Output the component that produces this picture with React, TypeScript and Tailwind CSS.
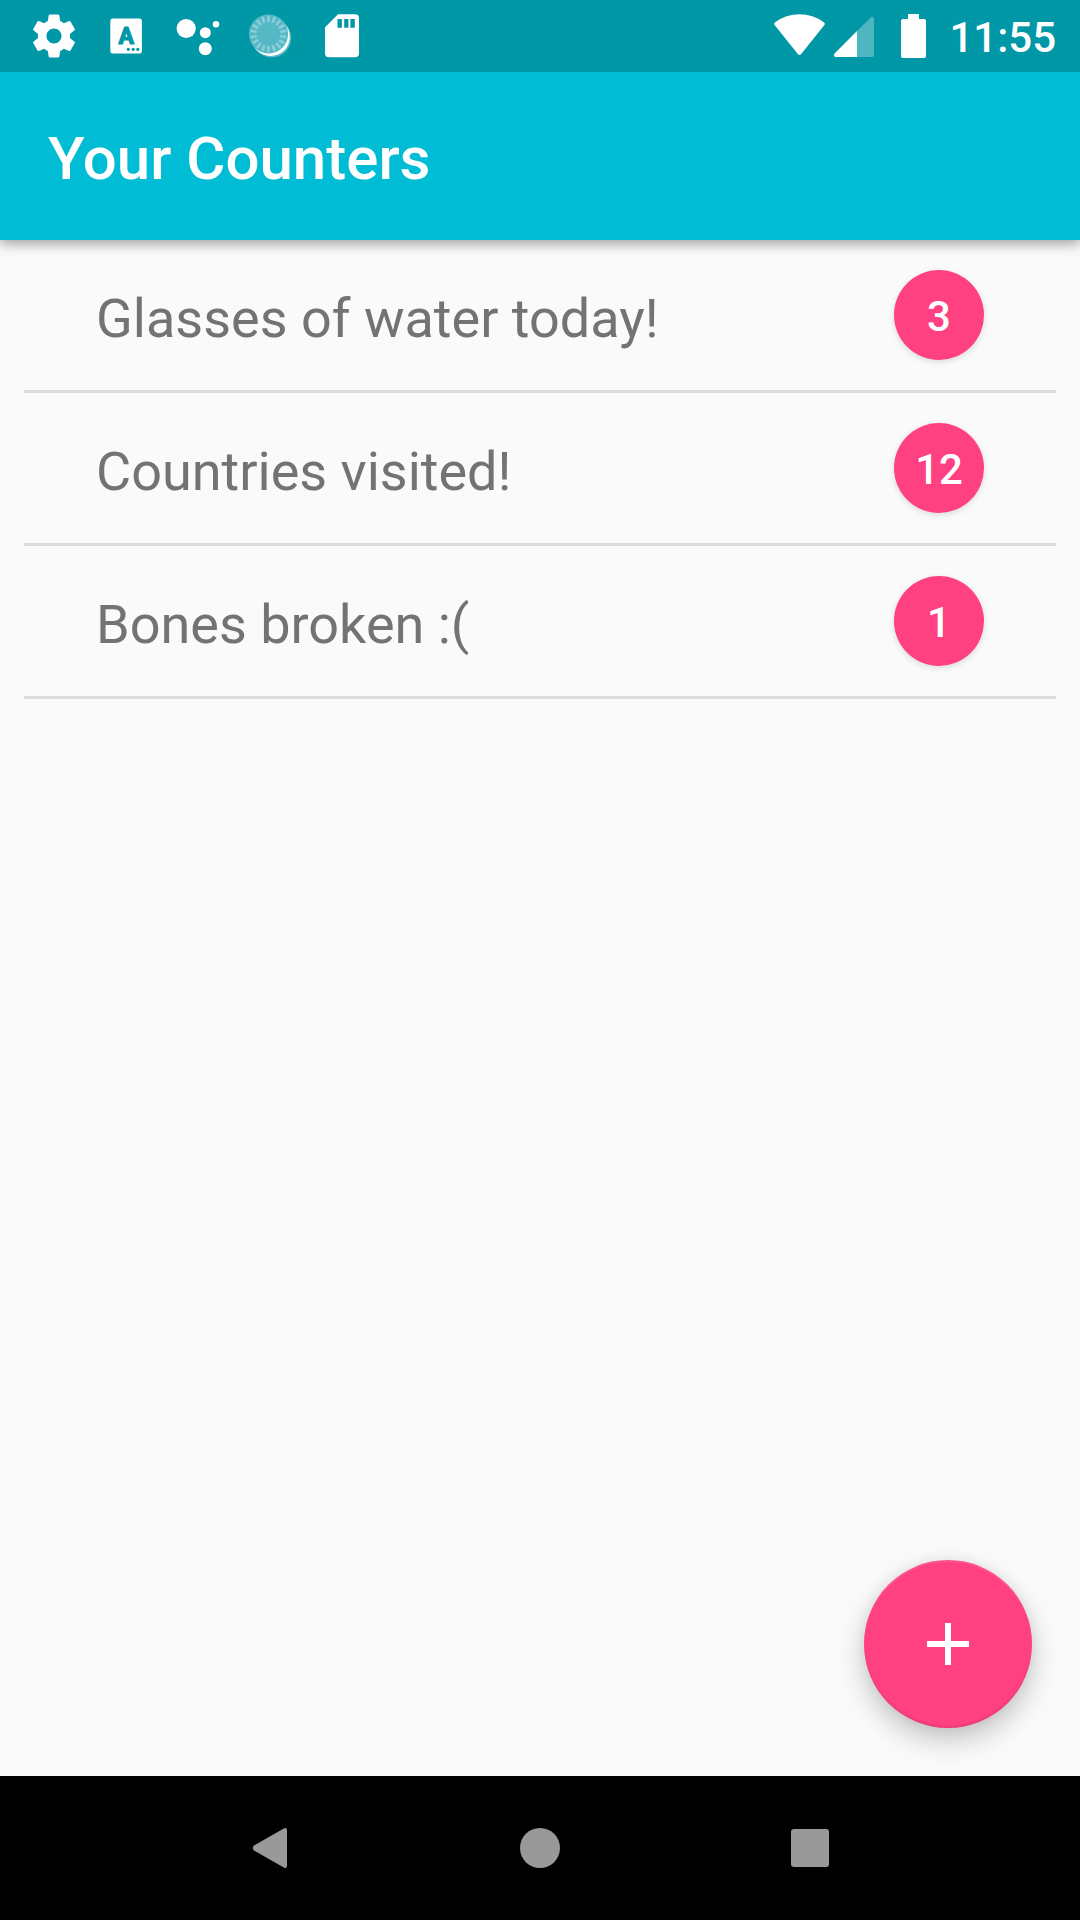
import React from "react";

const counters = [
  { name: "Glasses of water today!", count: 3 },
  { name: "Countries visited!", count: 12 },
  { name: "Bones broken :(", count: 1 },
];

const tickAngles = Array.from({ length: 18 }, (_, i) => i * 20);

function StatusIcon({ label, children }: { label: string; children: React.ReactNode }) {
  return (
    <svg role="img" aria-label={label} viewBox="0 0 72 72" className="size-18 shrink-0" fill="#fff">
      {children}
    </svg>
  );
}

function StatusBar() {
  return (
    <div className="relative z-10 flex h-18 items-center justify-between bg-[#0097a7] pr-6 pl-[18px] text-white">
      <div className="flex items-center">
        <StatusIcon label="Settings">
          <path
            transform="translate(10.2 10.2) scale(2.15)"
            d="M19.43 12.98c.04-.32.07-.64.07-.98s-.03-.66-.07-.98l2.11-1.65c.19-.15.24-.42.12-.64l-2-3.46c-.12-.22-.39-.3-.61-.22l-2.49 1c-.52-.4-1.08-.73-1.69-.98l-.38-2.65C14.46 2.18 14.25 2 14 2h-4c-.25 0-.46.18-.49.42l-.38 2.65c-.61.25-1.17.59-1.69.98l-2.49-1c-.23-.09-.49 0-.61.22l-2 3.46c-.13.22-.07.49.12.64l2.11 1.65c-.04.32-.07.65-.07.98s.03.66.07.98l-2.11 1.65c-.19.15-.24.42-.12.64l2 3.46c.12.22.39.3.61.22l2.49-1c.52.4 1.08.73 1.69.98l.38 2.65c.03.24.24.42.49.42h4c.25 0 .46-.18.49-.42l.38-2.65c.61-.25 1.17-.59 1.69-.98l2.49 1c.23.09.49 0 .61-.22l2-3.46c.12-.22.07-.49-.12-.64l-2.11-1.65zM12 15.5c-1.93 0-3.5-1.57-3.5-3.5s1.57-3.5 3.5-3.5 3.5 1.57 3.5 3.5-1.57 3.5-3.5 3.5z"
          />
        </StatusIcon>
        <StatusIcon label="Keyboard">
          <rect x="20.3" y="18.5" width="31.6" height="35" rx="2.5" />
          <text
            x="36.2"
            y="43.7"
            textAnchor="middle"
            fontFamily="Roboto, sans-serif"
            fontSize="23"
            fontWeight="700"
            fill="#0097a7"
            stroke="#0097a7"
            strokeWidth="1.2"
            strokeLinejoin="round"
          >
            A
          </text>
          <g fill="#0097a7">
            <circle cx="38.3" cy="49.3" r="1.6" />
            <circle cx="43.2" cy="49.3" r="1.6" />
            <circle cx="47.8" cy="49.3" r="1.6" />
          </g>
        </StatusIcon>
        <StatusIcon label="Assistant">
          <circle cx="24.2" cy="28.5" r="9.6" />
          <circle cx="43.3" cy="32.7" r="5.5" />
          <circle cx="54" cy="24.3" r="3.2" />
          <circle cx="43.3" cy="48.7" r="6.5" />
        </StatusIcon>
        <StatusIcon label="Sync in progress">
          <circle cx="37.6" cy="37.8" r="19.6" opacity=".35" />
          <circle cx="36.6" cy="36.8" r="19.2" />
          <circle cx="34.5" cy="34" r="19.6" fill="#55b8c5" />
          <g stroke="#8bced7" strokeWidth="2.6">
            {tickAngles.map((a) => (
              <line key={a} x1="34.5" y1="15.8" x2="34.5" y2="22" transform={`rotate(${a} 34.5 34)`} />
            ))}
          </g>
        </StatusIcon>
        <StatusIcon label="SD card">
          <path
            fillRule="evenodd"
            d="M32 14.3H49a4 4 0 0 1 4 4V53.3a4 4 0 0 1-4 4H23a4 4 0 0 1-4-4V27.2ZM31.5 19v8.7h4.4V19ZM38.2 19v8.7h4.2V19ZM44.4 19v8.7h4.4V19Z"
          />
        </StatusIcon>
      </div>
      <div className="flex items-center">
        <svg role="img" aria-label="Wi-Fi" viewBox="0 0 51 72" className="h-18 w-[51px]" fill="#fff">
          <path d="M.8 25.3Q-.6 23.5 1.2 22.2Q12 14.2 25.5 14.2T49.8 22.2Q51.6 23.5 50.2 25.3L27.2 54Q25.5 56 23.8 54Z" />
        </svg>
        <svg role="img" aria-label="Mobile signal" viewBox="0 0 40 72" className="ml-[9px] h-18 w-10" fill="#fff">
          <path d="M23 31V57H38Q40 57 40 55V18.5Q39.3 16 37 17.2Z" opacity=".3" />
          <path d="M23 31V57H1.5Q-1 56 .6 53.5Z" />
        </svg>
        <svg role="img" aria-label="Battery" viewBox="0 0 25 72" className="ml-[27px] h-18 w-[25px]" fill="#fff">
          <path d="M7 14H18V19H23Q25 19 25 21V56Q25 58 23 58H2Q0 58 0 56V21Q0 19 2 19H7Z" />
        </svg>
        <time className="ml-[23px] pt-1 text-[42px] leading-none font-medium">11:55</time>
      </div>
    </div>
  );
}

export default function App() {
  return (
    <div className="flex min-h-screen flex-col bg-[#fafafa] font-[Roboto,sans-serif]">
      <StatusBar />
      <header className="relative flex h-42 items-center bg-[#00bcd4] px-12 shadow-[0_4px_12px_rgba(0,0,0,0.36)]">
        <h1 className="pt-1.5 text-[60px] leading-none font-medium text-white">Your Counters</h1>
      </header>
      <main className="relative flex-1">
        <ul className="px-6">
          {counters.map((c) => (
            <li
              key={c.name}
              className="flex items-center justify-between border-b-3 border-[#dbdbdb] px-18 py-[30px]"
            >
              <span className="pt-2 text-[54px] leading-none text-[#737373]">{c.name}</span>
              <button
                type="button"
                aria-label={`${c.name} ${c.count}`}
                className="flex size-[90px] items-center justify-center rounded-full bg-[#ff4081] pt-1 text-[42px] leading-none font-medium text-white shadow-[0_2px_6px_rgba(0,0,0,0.13)]"
              >
                {c.count}
              </button>
            </li>
          ))}
        </ul>
        <button
          type="button"
          aria-label="Add counter"
          className="absolute right-12 bottom-12 flex size-42 items-center justify-center rounded-full bg-[#ff4081] shadow-[0_12px_28px_rgba(0,0,0,0.22),0_0_12px_rgba(0,0,0,0.06),inset_0_-2px_2px_rgba(0,0,0,0.08),inset_0_2px_2px_rgba(255,255,255,0.12)]"
        >
          <svg viewBox="0 0 42 42" className="size-[42px]" fill="#fff" aria-hidden="true">
            <path d="M18 0h6v18h18v6H24v18h-6V24H0v-6h18z" />
          </svg>
        </button>
      </main>
      <nav aria-label="System" className="flex h-36 items-center justify-center bg-black">
        <button type="button" aria-label="Back" className="flex h-full w-1/4 items-center justify-center">
          <svg viewBox="0 0 40 40" className="size-10" fill="#999">
            <path d="M33.8 .6Q37 -1 37 2.5V37.5Q37 41 33.8 39.4L4 22.5Q1.6 20 4 17.5Z" />
          </svg>
        </button>
        <button type="button" aria-label="Home" className="flex h-full w-1/4 items-center justify-center">
          <span className="size-10 rounded-full bg-[#999]" />
        </button>
        <button type="button" aria-label="Recent apps" className="flex h-full w-1/4 items-center justify-center">
          <span className="size-[38px] rounded-[3px] bg-[#999]" />
        </button>
      </nav>
    </div>
  );
}
